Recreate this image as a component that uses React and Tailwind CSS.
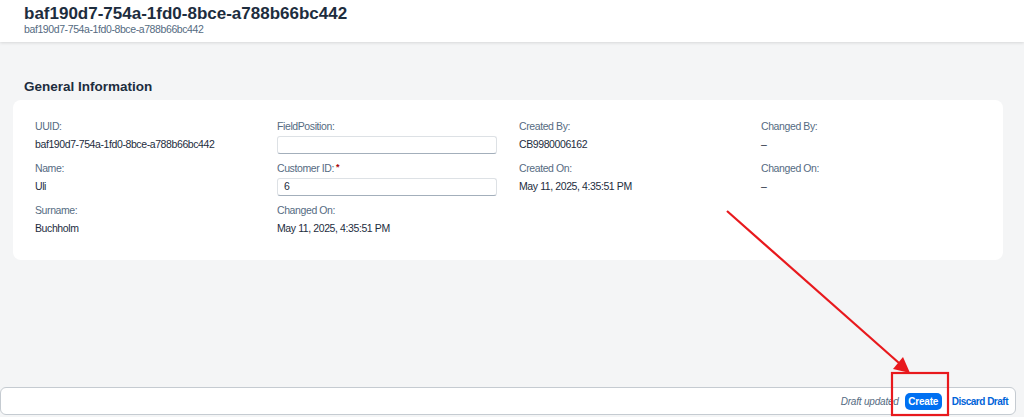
import React from "react";

const valueCls = "h-[20px] flex items-center text-[10.5px] tracking-[-0.4px] text-[#1d2d3e]";
const labelCls = "h-[16px] flex items-center text-[10.5px] tracking-[-0.4px] text-[#556b82]";

function Field({ label, value }) {
  return (
    <div className="flex flex-col mb-[6px]">
      <div className={labelCls}>{label}</div>
      <div className={valueCls}>{value}</div>
    </div>
  );
}

function InputField({ label, value, required }) {
  return (
    <div className="flex flex-col mb-[6px]">
      <div className={labelCls}>
        {label}
        {required && <span className="text-[#aa0808] ml-[2px] -mt-[3px] text-[9px] font-bold">*</span>}
      </div>
      <div className="h-[20px] flex items-center">
        <div className="w-[220px] h-[18px] bg-white border border-[#dde1e5] border-b-[#a3afbb] rounded-[3px] px-[6px] flex items-center text-[10.5px] text-[#1d2d3e]">
          {value}
        </div>
      </div>
    </div>
  );
}

export default function App() {
  return (
    <div
      className="relative w-[1024px] h-[417px] bg-[#f4f5f6] overflow-hidden flex flex-col"
      style={{ fontFamily: "'Liberation Sans', Arial, sans-serif" }}
    >
      <div className="h-[42px] shrink-0 bg-white shadow-[0_1px_3px_rgba(0,0,0,0.12)] px-[24px] pt-[3px] flex flex-col">
        <div className="text-[17px] font-bold text-[#1d2d3e] leading-[21px]">
          baf190d7-754a-1fd0-8bce-a788b66bc442
        </div>
        <div className="text-[10.5px] tracking-[-0.4px] text-[#556b82] leading-[11px]">
          baf190d7-754a-1fd0-8bce-a788b66bc442
        </div>
      </div>

      <div className="px-[24px] pt-[36px] pb-[4px] text-[13.5px] font-bold text-[#1d2d3e] leading-[18px]">
        General Information
      </div>

      <div className="mx-[13px] w-[990px] h-[160px] shrink-0 bg-white rounded-[8px] pl-[22px] pt-[19px] grid grid-cols-[242px_242px_242px_242px] content-start">
        <div className="flex flex-col">
          <Field label="UUID:" value="baf190d7-754a-1fd0-8bce-a788b66bc442" />
          <Field label="Name:" value="Uli" />
          <Field label="Surname:" value="Buchholm" />
        </div>
        <div className="flex flex-col">
          <InputField label="FieldPosition:" value="" />
          <InputField label="Customer ID:" value="6" required />
          <Field label="Changed On:" value="May 11, 2025, 4:35:51 PM" />
        </div>
        <div className="flex flex-col">
          <Field label="Created By:" value="CB9980006162" />
          <Field label="Created On:" value="May 11, 2025, 4:35:51 PM" />
        </div>
        <div className="flex flex-col">
          <Field label="Changed By:" value="–" />
          <Field label="Changed On:" value="–" />
        </div>
      </div>

      <div className="flex-1" />

      <div className="mb-[2px] mr-[8px] h-[28px] shrink-0 bg-white border border-[#c5cbd1] rounded-[6px] flex items-center justify-end pr-[7px]">
        <span className="text-[10px] italic tracking-[-0.2px] text-[#556b82] mr-[6px]">Draft updated</span>
        <button className="h-[17px] w-[37px] justify-center bg-[#0070f2] text-white text-[10px] font-bold tracking-[-0.2px] rounded-[5px] mr-[10px] flex items-center">
          Create
        </button>
        <span className="text-[10px] font-bold tracking-[-0.5px] text-[#0064d9]">Discard Draft</span>
      </div>

      <svg className="absolute left-0 top-0 pointer-events-none" width="1024" height="417">
        <line x1="727" y1="211" x2="899" y2="363" stroke="#e8191d" strokeWidth="2.2" />
        <polygon points="910,373 893,369 903,357" fill="#e8191d" />
        <rect x="892" y="373" width="56" height="42" fill="none" stroke="#e8191d" strokeWidth="2.2" />
      </svg>
    </div>
  );
}
